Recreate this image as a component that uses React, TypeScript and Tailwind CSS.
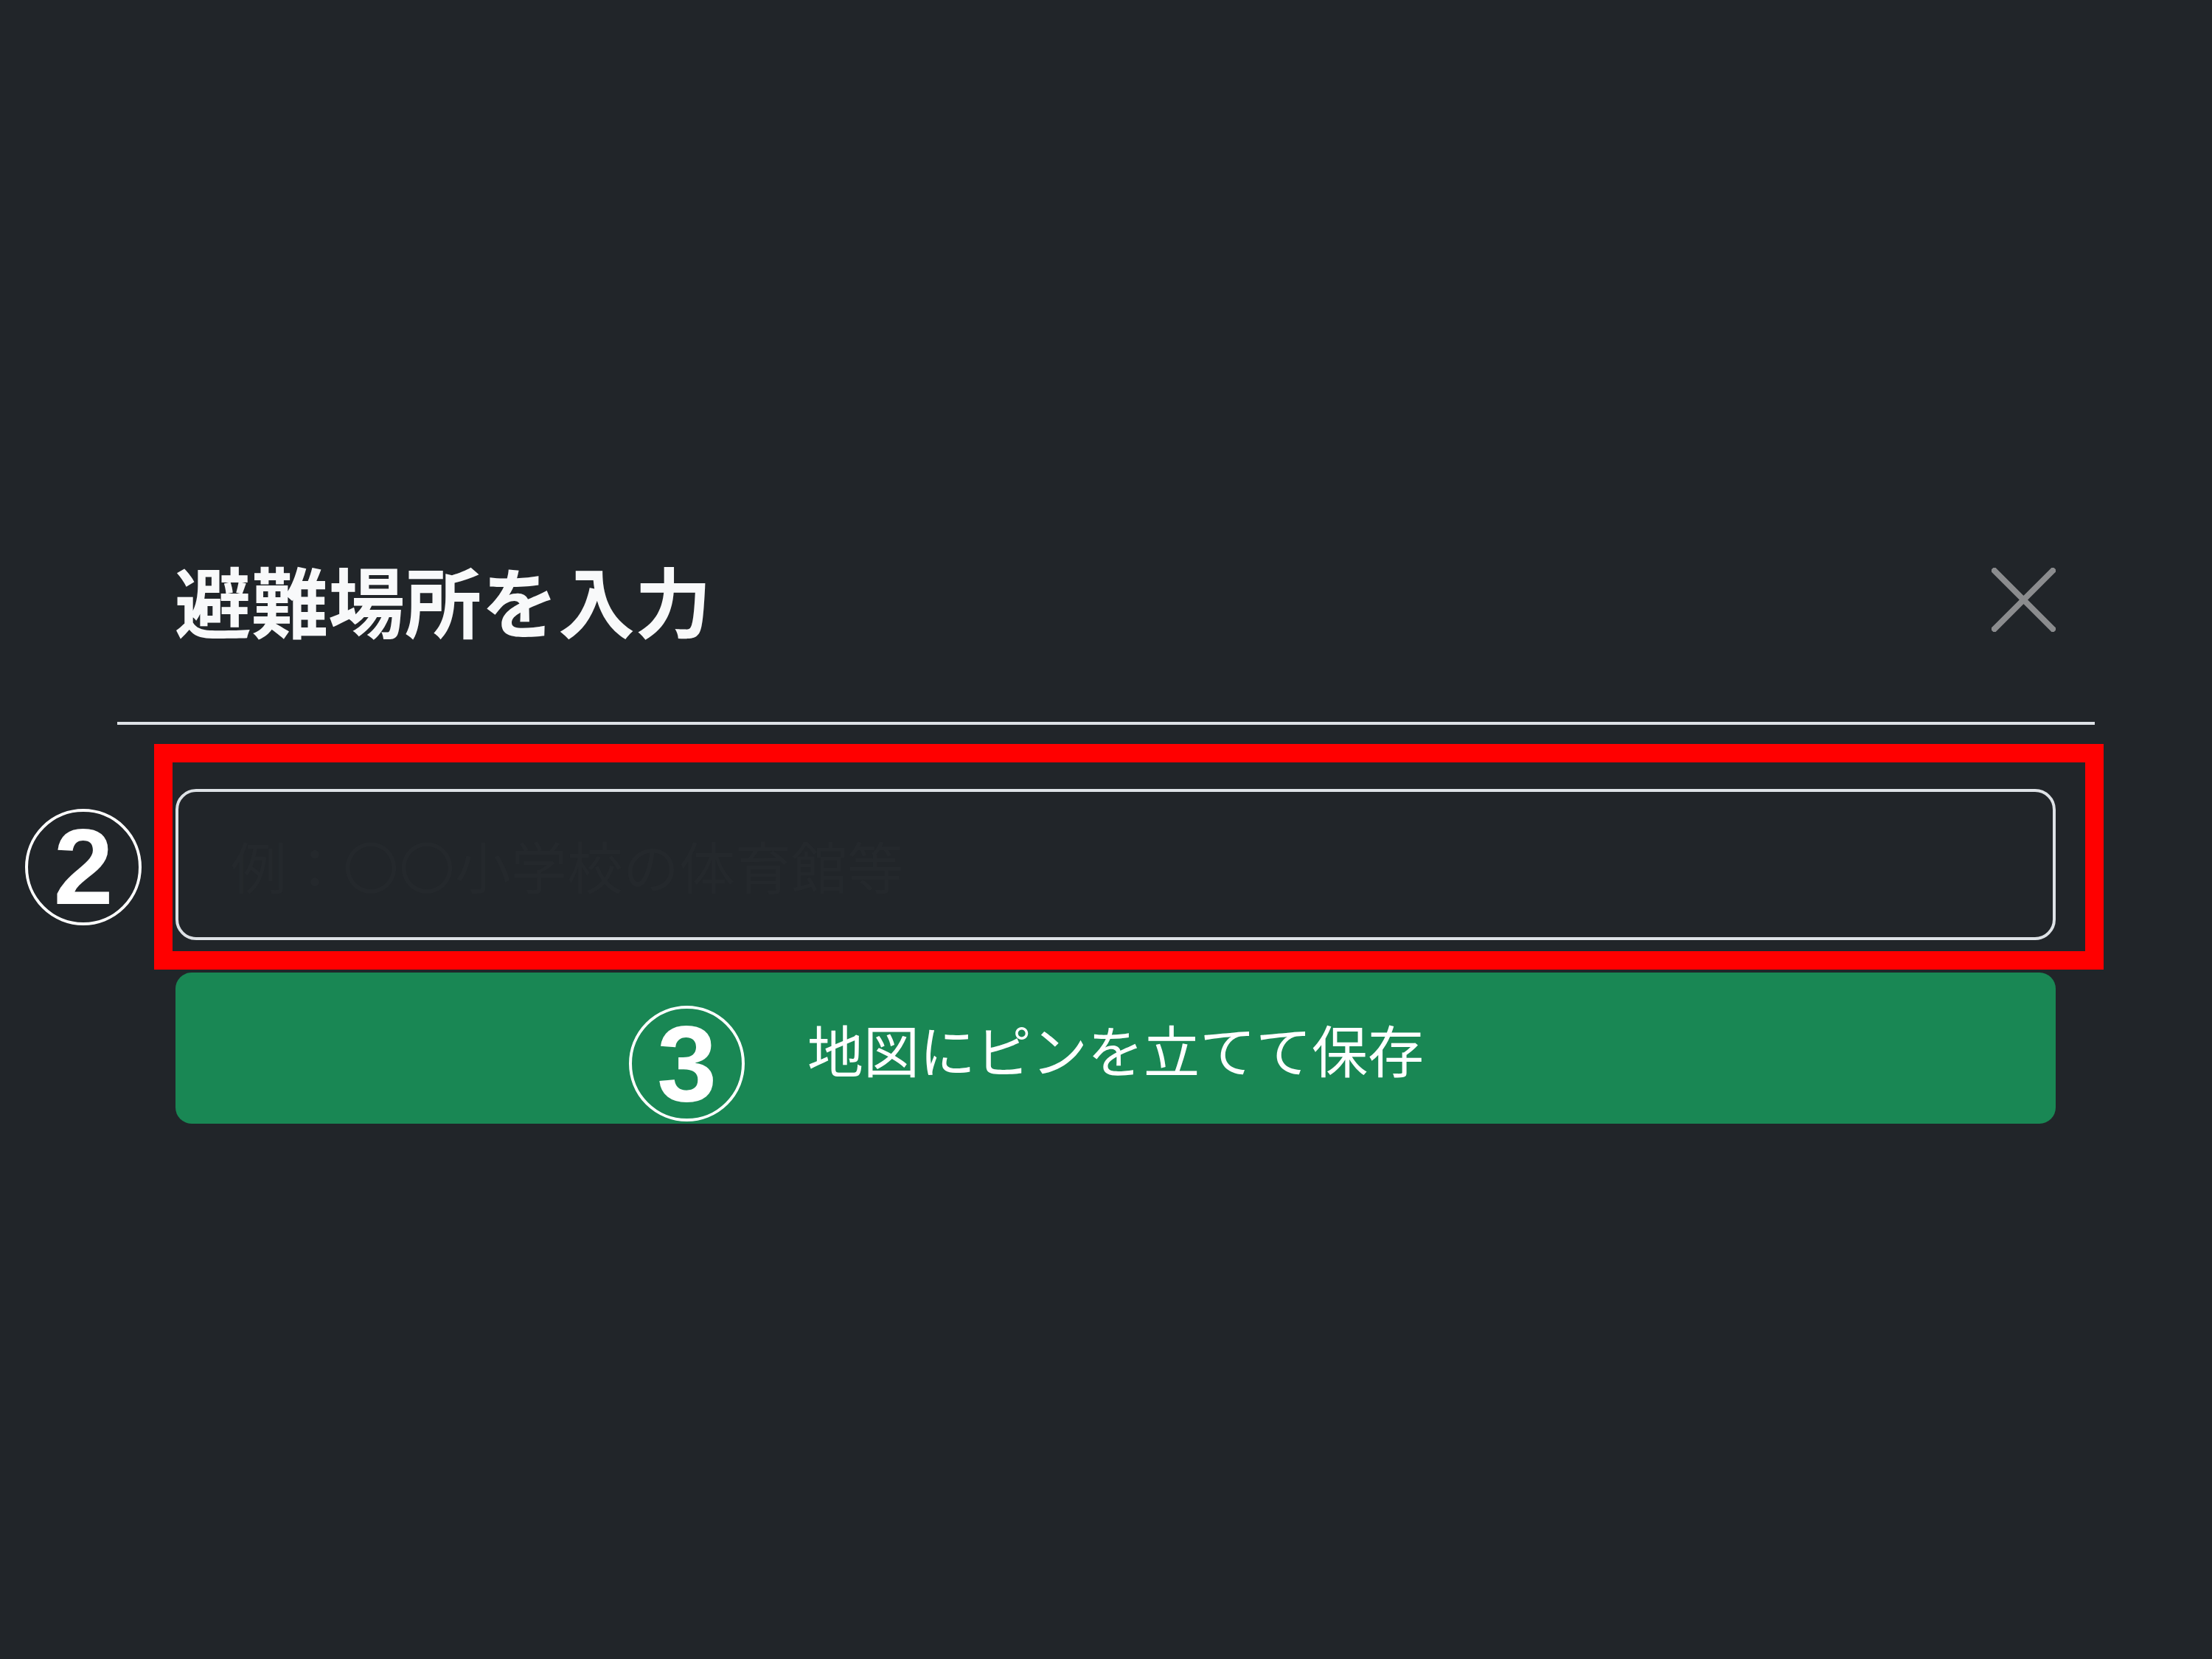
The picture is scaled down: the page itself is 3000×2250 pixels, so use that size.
import React from "react";

const jp = { fontFamily: '"Noto Sans CJK JP", "Noto Sans", sans-serif' };

export default function App() {
  return (
    <div className="w-[3000px] h-[2250px] bg-[#212529] pt-[647px] pl-[159px]" style={jp}>
      {/* Modal */}
      <div className="w-[2682px] bg-[#212529]">
        {/* Header */}
        <div className="flex h-[332px] items-center justify-between pl-[78px] pr-[53px]">
          <h2 className="text-[104px] font-bold leading-none text-[#f8f9fa]">避難場所を入力</h2>
          <button className="flex h-[87px] w-[87px] items-center justify-center">
            <svg width="87" height="87" viewBox="0 0 87 87" fill="none">
              <path d="M4 4L83 83M83 4L4 83" stroke="#8b8c8e" strokeWidth="8" strokeLinecap="square" />
            </svg>
          </button>
        </div>
        <div className="h-[4px] w-full bg-[#dee2e6]" />

        {/* Body */}
        <div className="flex flex-col gap-[44px] pt-[87px] pl-[79px] pr-[53px]">
          <div className="relative">
            <input
              type="text"
              placeholder="例：〇〇小学校の体育館等"
              className="h-[205px] w-full rounded-[28px] border-[4px] border-[#dee2e6] bg-transparent pl-[71px] text-[76px] text-white outline-none placeholder:text-[#24282c]"
            />
            {/* annotation */}
            <div className="pointer-events-none absolute -left-[29px] -top-[61px] h-[306px] w-[2644px] border-[25px] border-[#ff0000]" />
            <div
              className="pointer-events-none absolute -left-[204px] top-[27px] flex h-[158px] w-[158px] items-center justify-center rounded-full border-[4px] border-white text-[146px] font-bold leading-none text-white"
              style={{ fontFamily: '"Liberation Sans", Arial, sans-serif' }}
            >
              2
            </div>
          </div>

          <button className="relative flex h-[205px] w-full items-center justify-center rounded-[22px] bg-[#198754] text-[76px] leading-none text-white">
            <span>地図にピンを立てて保存</span>
            <span
              className="pointer-events-none absolute left-[615px] top-[45px] flex h-[157px] w-[157px] items-center justify-center rounded-full border-[4px] border-white text-[146px] font-bold leading-none text-white"
              style={{ fontFamily: '"Liberation Sans", Arial, sans-serif' }}
            >
              3
            </span>
          </button>
        </div>
      </div>
    </div>
  );
}
